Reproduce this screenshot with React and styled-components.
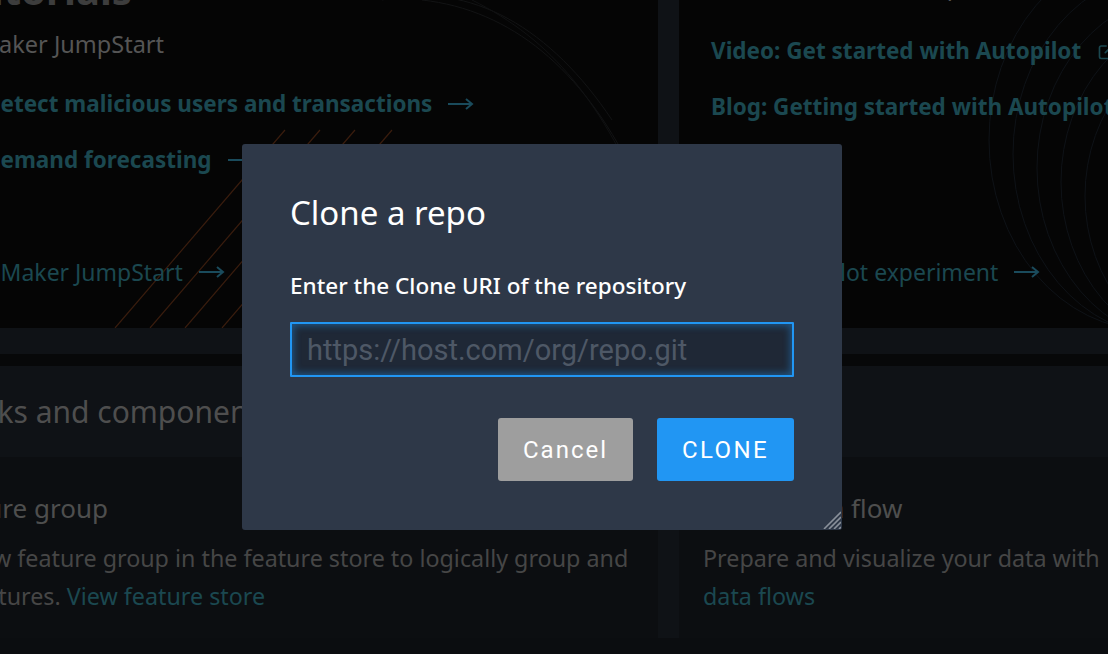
import React from 'react';
import styled, { createGlobalStyle } from 'styled-components';
import { ExternalLink } from 'lucide-react';

const GlobalStyle = createGlobalStyle`
  html, body {
    margin: 0;
    padding: 0;
    background: #0f1216;
    overflow: hidden;
  }
  body {
    font-family: "Noto Sans", "Open Sans", sans-serif;
  }
  * { box-sizing: border-box; }
`;

const Page = styled.div`
  position: relative;
  width: 1108px;
  height: 654px;
  overflow: hidden;
  background: #0f1216;
`;

const Canvas = styled.div`
  margin-left: -48px;
  margin-top: -60px;
  display: flex;
  flex-direction: column;
  width: 1460px;
`;

const Row = styled.div`
  display: grid;
  grid-template-columns: 706px 720px;
  column-gap: 21px;
`;

const HeroCard = styled.div`
  position: relative;
  height: 388px;
  overflow: hidden;
  background: #050505;
  padding: ${p => p.$top}px 32px 41px;
  display: flex;
  flex-direction: column;
`;

const Art = styled.svg`
  position: absolute;
  inset: 0;
  width: 100%;
  height: 100%;
  pointer-events: none;
`;

const HeroTitle = styled.h1`
  position: relative;
  margin: 0;
  font-size: 40px;
  line-height: 48px;
  font-weight: 700;
  color: #3d3d3d;
  text-indent: ${p => p.$indent || 0}px;
  white-space: nowrap;
`;

const Subtitle = styled.div`
  position: relative;
  margin-top: ${p => p.$mt || 0}px;
  font-size: 23.5px;
  line-height: 30px;
  color: #555;
  text-indent: ${p => p.$indent || 0}px;
  white-space: nowrap;
`;

const LinkRow = styled.a`
  position: relative;
  display: flex;
  align-items: center;
  gap: 16px;
  margin-top: ${p => (p.$auto ? 'auto' : `${p.$mt}px`)};
  margin-left: ${p => p.$indent || 0}px;
  font-size: ${p => (p.$bold ? 22.5 : 23)}px;
  line-height: 30px;
  font-weight: ${p => (p.$bold ? 700 : 400)};
  color: #1b4850;
  text-decoration: none;
  white-space: nowrap;
`;

const Arrow = () => (
  <svg width="26" height="12" viewBox="0 0 26 12">
    <path d="M0 6H24M18 1L24 6L18 11" stroke="#1a4b5c" strokeWidth="2" fill="none" />
  </svg>
);

const Band = styled.div`
  margin-top: 26px;
  height: 12px;
  background: #070809;
`;

const SectionHead = styled.div`
  height: 91px;
  padding-left: 32px;
  display: flex;
  align-items: center;
  font-size: 30px;
  color: #4e4e4e;
  white-space: nowrap;
  text-indent: ${p => p.$indent}px;
`;

const InfoCard = styled.div`
  height: 181px;
  background: #0c0e11;
  padding: 34px 24px 0;
  overflow: hidden;
`;

const InfoTitle = styled.div`
  font-size: 26px;
  line-height: 34px;
  color: #4e4e4e;
  white-space: nowrap;
  text-indent: ${p => p.$indent || 0}px;
`;

const InfoText = styled.p`
  margin: 14px 0 0;
  font-size: 23.3px;
  line-height: 38px;
  color: #464646;
  white-space: nowrap;
  text-indent: ${p => p.$indent || 0}px;
  margin-left: ${p => p.$shift || 0}px;
`;

const InlineLink = styled.span`
  color: #1b4850;
`;

const Footer = styled.div`
  height: 60px;
  background: #0b0d10;
`;

const Modal = styled.div`
  position: absolute;
  left: 242px;
  top: 144px;
  width: 600px;
  height: 386px;
  background: #2e3848;
  border-radius: 3px;
  padding: 49px 48px 0;
  display: flex;
  flex-direction: column;
`;

const ModalTitle = styled.h2`
  margin: 0;
  font-size: 33px;
  line-height: 40px;
  font-weight: 400;
  color: #fff;
`;

const Label = styled.label`
  margin-top: 39px;
  font-size: 22.5px;
  line-height: 28px;
  font-weight: 500;
  color: #fff;
`;

const Input = styled.input`
  margin-top: 22px;
  width: 100%;
  height: 55px;
  border: 2px solid #2196f3;
  border-radius: 1px;
  background: #1f2836;
  box-shadow: inset 0 0 7px 2px rgba(33, 150, 243, 0.4);
  padding: 0 15px;
  font-family: Roboto, "Liberation Sans", sans-serif;
  font-size: 29px;
  color: #dfe3e8;
  outline: none;
  &::placeholder {
    color: #4e5866;
  }
`;

const Actions = styled.div`
  margin-top: 41px;
  display: flex;
  justify-content: flex-end;
  gap: 24px;
`;

const Button = styled.button`
  width: ${p => p.$w}px;
  height: 63px;
  border: none;
  border-radius: 3px;
  background: ${p => p.$bg};
  color: #fff;
  font-family: Roboto, "Liberation Sans", sans-serif;
  font-size: 24px;
  font-weight: 400;
  letter-spacing: ${p => p.$ls}px;
  cursor: pointer;
`;

const Grip = styled.svg`
  position: absolute;
  right: 1px;
  bottom: 1px;
`;

function LeftArt() {
  const starts = [163, 198, 233, 270];
  return (
    <Art viewBox="0 0 706 388" preserveAspectRatio="none">
      {starts.map(x => (
        <line key={x} x1={x} y1={388} x2={x + 170} y2={190} stroke="#3a1d0e" strokeWidth="1.2" />
      ))}
      <path d="M430 60 C520 40 600 90 660 180" stroke="#121314" fill="none" />
      <path d="M470 60 C560 70 630 130 680 230" stroke="#121314" fill="none" />
      <path d="M520 60 C600 100 650 160 700 280" stroke="#101112" fill="none" />
    </Art>
  );
}

function RightArt() {
  return (
    <Art viewBox="0 0 720 388" preserveAspectRatio="none">
      {[0, 1, 2, 3, 4, 5].map(i => (
        <ellipse
          key={i}
          cx={470 + i * 18}
          cy={200 + i * 14}
          rx={160 - i * 6}
          ry={190 - i * 8}
          stroke="#0e1217"
          fill="none"
        />
      ))}
    </Art>
  );
}

export default function App() {
  return (
    <Page>
      <GlobalStyle />
      <Canvas>
        <Row>
          <HeroCard $top={26}>
            <LeftArt />
            <HeroTitle $indent={-305}>Solutions and tutorials</HeroTitle>
            <Subtitle $mt={15} $indent={-60}>SageMaker JumpStart</Subtitle>
            <LinkRow $mt={30} $bold href="#">
              Detect malicious users and transactions <Arrow />
            </LinkRow>
            <LinkRow $mt={26} $bold href="#">
              Demand forecasting <Arrow />
            </LinkRow>
            <LinkRow $auto $indent={-123} href="#">
              Explore SageMaker JumpStart <Arrow />
            </LinkRow>
          </HeroCard>
          <HeroCard $top={31}>
            <RightArt />
            <Subtitle>Get started with Autopilot</Subtitle>
            <LinkRow $mt={35} $bold href="#">
              Video: Get started with Autopilot <ExternalLink size={20} color="#1b4850" />
            </LinkRow>
            <LinkRow $mt={26} $bold href="#">
              Blog: Getting started with Autopilot <ExternalLink size={20} color="#1b4850" />
            </LinkRow>
            <LinkRow $auto $indent={-52} href="#">
              Create an Autopilot experiment <Arrow />
            </LinkRow>
          </HeroCard>
        </Row>
        <Band />
        <SectionHead $indent={-110}>Notebooks and components</SectionHead>
        <Row>
          <InfoCard>
            <InfoTitle $indent={-124}>Create feature group</InfoTitle>
            <InfoText $indent={-95} $shift={-12}>
              Create a new feature group in the feature store to logically group and
              <br />
              features. <InlineLink>View feature store</InlineLink>
            </InfoText>
          </InfoCard>
          <InfoCard>
            <InfoTitle>Create data flow</InfoTitle>
            <InfoText>
              Prepare and visualize your data with
              <br />
              <InlineLink>data flows</InlineLink>
            </InfoText>
          </InfoCard>
        </Row>
        <Footer />
      </Canvas>

      <Modal role="dialog">
        <ModalTitle>Clone a repo</ModalTitle>
        <Label htmlFor="uri">Enter the Clone URI of the repository</Label>
        <Input id="uri" placeholder="https://host.com/org/repo.git" />
        <Actions>
          <Button $w={135} $bg="#9e9e9e" $ls={2}>Cancel</Button>
          <Button $w={137} $bg="#2196f3" $ls={2.4}>CLONE</Button>
        </Actions>
        <Grip width="20" height="20" viewBox="0 0 20 20">
          <path d="M20 3L3 20M20 8L8 20M20 13L13 20M20 18L18 20" stroke="#8a919b" strokeWidth="1.6" />
        </Grip>
      </Modal>
    </Page>
  );
}
